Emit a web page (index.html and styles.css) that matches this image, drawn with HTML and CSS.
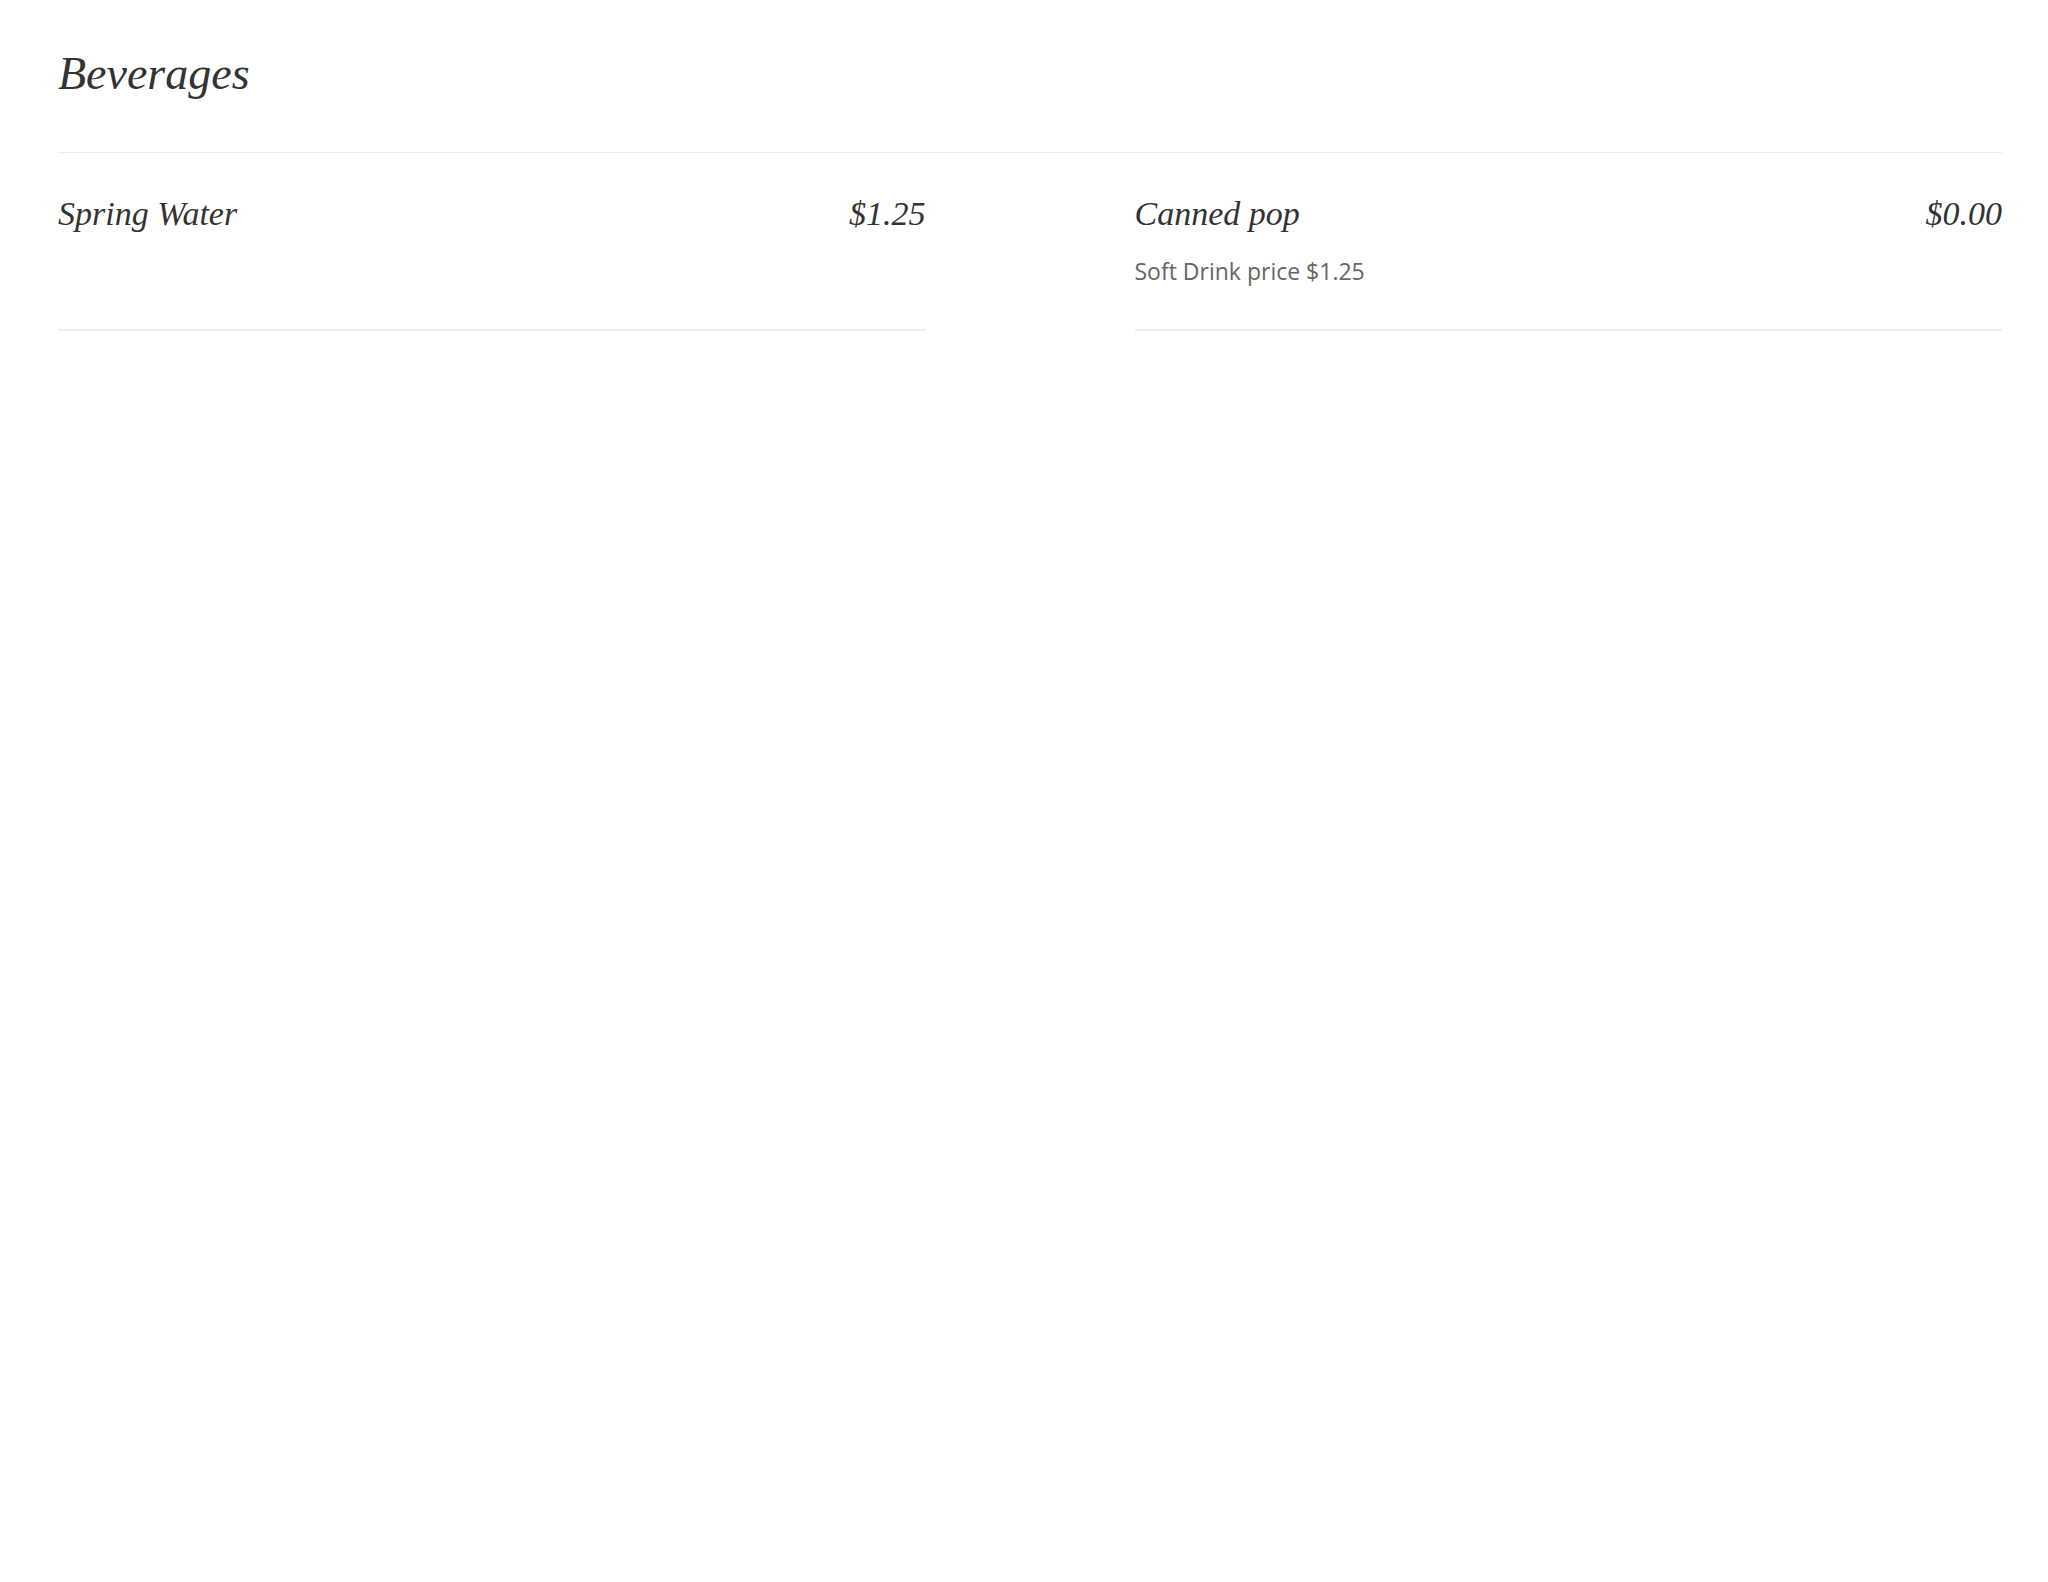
FILE: index.html
```html
<!DOCTYPE html>
<html lang="en">
<head>
    <meta charset="UTF-8">
    <meta name="viewport" content="width=device-width, initial-scale=1.0">
    <title>Menu - Beverages</title>
    <link rel="stylesheet" href="styles.css">
</head>
<body>

    <div class="menu-section">
        <h2 class="section-title">Beverages</h2>

        <div class="menu-items">
            <div class="menu-item">
                <div class="item-head">
                    <span class="item-name">Spring Water</span>
                    <span class="item-price">$1.25</span>
                </div>
            </div>

            <div class="menu-item">
                <div class="item-head">
                    <span class="item-name">Canned pop</span>
                    <span class="item-price">$0.00</span>
                </div>
                <p class="item-desc">Soft Drink price $1.25</p>
            </div>
        </div>
    </div>

</body>
</html>
```

FILE: styles.css
```css
body {
    font-family: "Open Sans", Arial, sans-serif;
    background-color: #ffffff;
    color: #333;
    margin: 0;
    padding: 0;
}

.menu-section {
    padding: 0 46px 0 58px;
}

.section-title {
    font-family: "Liberation Serif", "Times New Roman", serif;
    font-style: italic;
    font-weight: normal;
    font-size: 46px;
    color: #333;
    margin: 0;
    padding-top: 46px;
    padding-bottom: 51px;
    line-height: 55px;
    border-bottom: 1px solid #ececec;
}

.menu-items {
    display: grid;
    grid-template-columns: 1fr 1fr;
    column-gap: 209px;
}

.menu-item {
    border-bottom: 2px solid #efefef;
    padding-top: 41px;
    min-height: 178px;
    box-sizing: border-box;
}

.item-head {
    display: flex;
    justify-content: space-between;
    align-items: baseline;
}

.item-name,
.item-price {
    font-family: "Liberation Serif", "Times New Roman", serif;
    font-style: italic;
    font-size: 34px;
    line-height: 40px;
    color: #333;
}

.item-desc {
    font-size: 23px;
    line-height: 31px;
    color: #666;
    margin: 22px 0 0;
}
```
